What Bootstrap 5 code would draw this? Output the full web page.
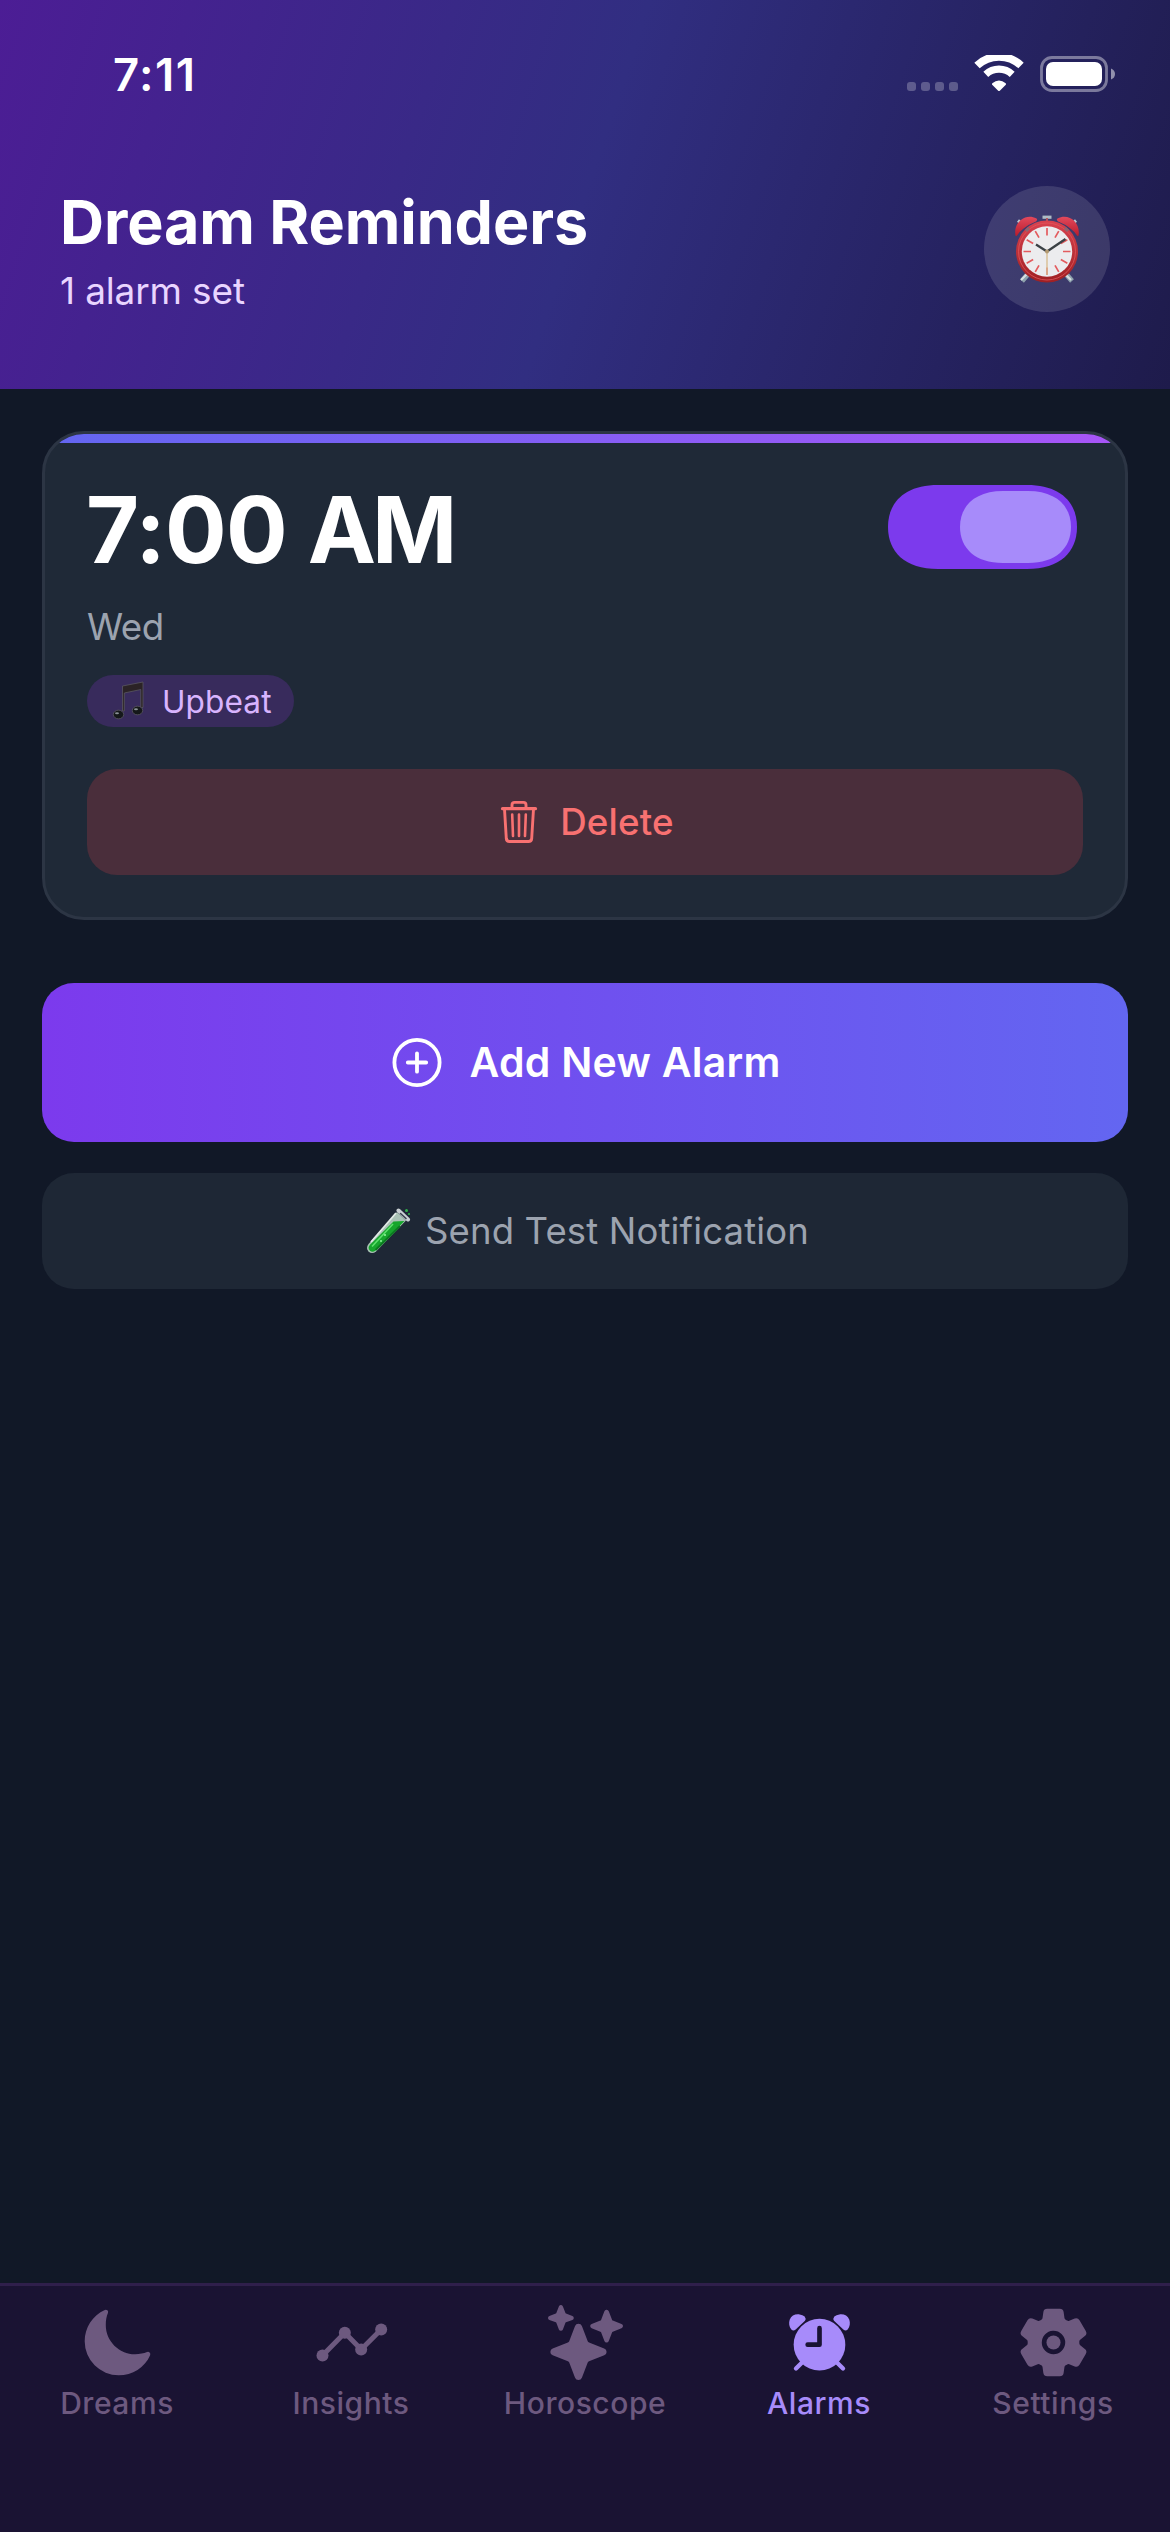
<!DOCTYPE html>
<html lang="en" data-bs-theme="dark">
<head>
<meta charset="utf-8">
<meta name="viewport" content="width=device-width, initial-scale=1">
<title>Dream Reminders</title>
<link href="https://cdn.jsdelivr.net/npm/bootstrap@5.3.0/dist/css/bootstrap.min.css" rel="stylesheet">
<style>
  body { background: #111827; font-family: Inter, "Liberation Sans", sans-serif; min-height: 2532px; }
  svg { display: block; flex: none; }
  .hero { height: 389px; background: linear-gradient(108.4deg, #4c1d95 0%, #312e81 50%, #1e1b4b 100%); }
  .status-row { height: 149px; padding: 0 54px 0 113px; }
  .status-icons { margin-bottom: 2px; }
  .clock-text { font-size: 45.5px; font-weight: 600; letter-spacing: 1.4px; line-height: 56px; }
  .title-row { padding: 35px 60px 0 60px; }
  .page-title { font-size: 61px; font-weight: 700; letter-spacing: -.1px; line-height: 76px; }
  .page-sub { font-size: 37px; letter-spacing: -.15px; line-height: 56px; margin-top: 2.5px; color: #e9d5ff; }
  .hero-icon { width: 126px; height: 126px; margin-top: 2px; background: rgba(255,255,255,.12); }
  main { padding: 42px 42px 0; }
  .alarm-card { height: 489px; border: 3px solid #2c3544; border-radius: 42px; background: #1f2937; }
  .accent-bar { height: 9px; background: linear-gradient(90deg, #6366f1, #a855f7); }
  .alarm-body { padding: 33px 42px 42px; }
  .alarm-time { font-size: 91.5px; font-weight: 700; letter-spacing: -.8px; line-height: 108px; margin-left: -1px; }
  .alarm-period { letter-spacing: -4px; }
  .switch-wrap { margin: 9px 6px 0 0; }
  .alarm-days { font-size: 36.7px; letter-spacing: -.5px; line-height: 51px; margin-top: 17px; color: #9ca3af; }
  .sound-pill { height: 52px; width: 207px; margin-top: 23px; padding-left: 25px; gap: 18px; background: #382b5c; color: #d8b4fe; font-size: 31.6px; letter-spacing: .1px; }
  .sound-pill span { padding-top: 1px; }
  .delete-btn { height: 106px; margin-top: 42px; border-radius: 30px; background: #4a2e3b; color: #f87171; font-size: 36.7px; font-weight: 500; letter-spacing: .2px; gap: 22px; border: 0; padding: 0 0 0 4px; }
  .add-btn { height: 159px; margin-top: 63px; border-radius: 32px; background: linear-gradient(90deg, #7c3aed, #6366f1); color: #fff; font-size: 41px; font-weight: 600; letter-spacing: .25px; gap: 27px; border: 0; padding: 0 0 0 3px; }
  .test-btn { height: 116px; margin-top: 31px; border-radius: 32px; background: #1e2735; color: #9ca3af; font-size: 36.5px; letter-spacing: .15px; gap: 14px; border: 0; padding: 0 0 0 5px; }
  .tabs { height: 249px; border-top: 3px solid #2f1f4b; background: #1a1333; padding-top: 18.5px; }
  .tab-link { color: #6d597f; font-size: 30px; font-weight: 500; letter-spacing: .55px; line-height: 40px; gap: 3px; padding: 0; }
  .tab-link.active { color: #a78bfa; }
</style>
<script src="https://cdn.jsdelivr.net/npm/bootstrap@5.3.0/dist/js/bootstrap.bundle.min.js"></script>
</head>
<body class="d-flex flex-column m-0">
<header class="hero text-white">
  <div class="status-row d-flex align-items-center justify-content-between">
    <span class="clock-text">7:11</span>
    <svg class="status-icons" width="209" height="38" viewBox="0 0 209 38">
      <g fill="#fff" fill-opacity=".25"><rect x="0" y="27" width="9" height="9" rx="3"/><rect x="14" y="27" width="9" height="9" rx="3"/><rect x="28" y="27" width="9" height="9" rx="3"/><rect x="42" y="27" width="9" height="9" rx="3"/></g>
      <g fill="none" stroke="#fff"><path d="M70 10.500A32 32 0 0 1 114 10.500" stroke-width="7.800"/><path d="M78.800 19.300A19.500 19.500 0 0 1 105.200 19.300" stroke-width="7.200"/></g>
      <path d="M85.300 28.200Q92 23 98.700 28.200Q99.400 29 98.800 29.700L92.800 35.700Q92 36.300 91.200 35.700L85.200 29.700Q84.600 29 85.300 28.200Z" fill="#fff"/>
      <rect x="134.500" y="2.500" width="65" height="33" rx="10.500" fill="none" stroke="#fff" stroke-opacity=".4" stroke-width="2.800"/>
      <rect x="139" y="7" width="56" height="24" rx="7" fill="#fff"/>
      <path d="M204 13.500Q208 15 208 19T204 24.500Z" fill="#fff" fill-opacity=".5"/>
    </svg>
  </div>
  <div class="title-row d-flex align-items-start justify-content-between">
    <div>
      <h1 class="page-title m-0">Dream Reminders</h1>
      <p class="page-sub mb-0">1 alarm set</p>
    </div>
    <div class="hero-icon rounded-circle d-flex align-items-center justify-content-center">
      <svg width="66" height="69" viewBox="0 0 66 69">
        <defs><linearGradient id="rim" x1="0" y1="0" x2="0" y2="1"><stop offset="0" stop-color="#d9424f"/><stop offset="1" stop-color="#9f2023"/></linearGradient>
        <linearGradient id="bell" x1="0" y1="0" x2="0" y2="1"><stop offset="0" stop-color="#e2495c"/><stop offset="1" stop-color="#b81c2c"/></linearGradient></defs>
        <path d="M14 59L8 66M52 59L58 66" stroke="#8fa3ad" stroke-width="5"/><path d="M13 59L7 65M51 59L57 65" stroke="#d8e0e4" stroke-width="2"/>
        <path d="M28.500 2.200H37.500" stroke="#aebcc5" stroke-width="3.200"/><path d="M33 3V9" stroke="#b2555f" stroke-width="2"/>
        <path d="M4 5.500L8 9M62 5.500L58 9" stroke="#b7c8d2" stroke-width="3"/>
        <circle cx="33" cy="36.500" r="31" fill="url(#rim)"/>
        <circle cx="33" cy="36.500" r="28.500" fill="none" stroke="#e0555c" stroke-width=".8"/>
        <circle cx="33" cy="36.500" r="25.200" fill="#ececee"/>
        <path d="M1.500 20.500C-1 8 11-2.500 22.500 3.500Q24 4.500 22 6.500Q15 9 9 14Q5 17 3 20.500Q2 21.500 1.500 20.500Z" fill="url(#bell)"/>
        <path d="M64.500 20.500C67 8 55-2.500 43.500 3.500Q42 4.500 44 6.500Q51 9 57 14Q61 17 63 20.500Q64 21.500 64.500 20.500Z" fill="url(#bell)"/>
        <path d="M12 16L15 13M54 16L51 13" stroke="#8b6570" stroke-width="3"/>
        <path transform="translate(0 -1)" d="M33 14V21.500M33 53.500V61M9.500 37.500H17M49 37.500H56.500M21.250 17.150L25 23.650M44.750 17.150L41 23.650M21.250 57.850L25 51.350M44.750 57.850L41 51.350M12.650 25.750L19.150 29.500M53.350 25.750L46.850 29.500M12.650 49.250L19.150 45.500M53.350 49.250L46.850 45.500" stroke="#e35b5e" stroke-width="1.700"/>
        <path d="M33 36.500V60" stroke="#d9bf93" stroke-width="1.400"/>
        <path d="M33 36.500L22 29.500M33 36.500L51.500 24" stroke="#3b4145" stroke-width="2.300"/>
        <circle cx="33" cy="36.500" r="2" fill="#b39a72"/>
      </svg>
    </div>
  </div>
</header>

<main class="flex-grow-1">
  <section class="alarm-card overflow-hidden">
    <div class="accent-bar"></div>
    <div class="alarm-body">
      <div class="d-flex justify-content-between align-items-start">
        <div class="alarm-time text-white">7:00 <span class="alarm-period">AM</span></div>
        <div class="switch-wrap" role="switch" aria-checked="true">
          <svg width="189" height="84" viewBox="0 0 189 84">
            <path d="M0 42C0 17 17 0 50 0H139C172 0 189 17 189 42S172 84 139 84H50C17 84 0 67 0 42Z" fill="#7c3aed"/>
            <path d="M72 42C72 21 87 6 115 6H140C168 6 183 21 183 42S168 78 140 78H115C87 78 72 63 72 42Z" fill="#a78bfa"/>
          </svg>
        </div>
      </div>
      <div class="alarm-days">Wed</div>
      <div class="sound-pill rounded-pill d-flex align-items-center">
        <svg width="32" height="40" viewBox="0 0 32 40" stroke="#59575f" stroke-width=".8">
          <path d="M10.500 5L31 1V26.500H28.800V8.500L12.300 12V30H10.500Z" fill="#2b2326"/>
          <ellipse cx="6.500" cy="33.500" rx="5.200" ry="4.300" fill="#15181a"/><ellipse cx="25.500" cy="29.500" rx="5.200" ry="4.300" fill="#15181a"/>
          <ellipse cx="5" cy="32.300" rx="2" ry="1" fill="#8b9296" stroke="none"/><ellipse cx="24" cy="28.300" rx="2" ry="1" fill="#8b9296" stroke="none"/>
        </svg>
        <span>Upbeat</span>
      </div>
      <button class="btn delete-btn w-100 d-flex align-items-center justify-content-center">
        <svg width="38" height="44" viewBox="0 0 38 44" fill="none" stroke="#f87171" stroke-width="2.900" stroke-linecap="round" stroke-linejoin="round">
          <path d="M4.500 9L6.300 38.500Q6.600 41.500 9.500 41.500H28.500Q31.400 41.500 31.700 38.500L33.500 9"/><path d="M2.500 8.700H35.500" stroke-width="3.200"/>
          <path d="M12 8V5Q12 2.400 14.600 2.400H23.400Q26 2.400 26 5V8"/><path d="M19 14.500V36M12.200 14.500L13 36M25.800 14.500L25 36" stroke-width="2.600"/>
        </svg>
        <span>Delete</span>
      </button>
    </div>
  </section>
  <button class="btn add-btn w-100 d-flex align-items-center justify-content-center">
    <svg width="50" height="50" viewBox="0 0 50 50" fill="none" stroke="#fff" stroke-width="3.800" stroke-linecap="round"><circle cx="25" cy="24.500" r="22.600"/><path d="M25 15.300V33.700M15.800 24.500H34.200"/></svg>
    <span>Add New Alarm</span>
  </button>
  <button class="btn test-btn w-100 d-flex align-items-center justify-content-center">
    <svg width="45" height="47" viewBox="0 0 45 47">
      <path d="M31 4L40 12.500L10 43.500Q6 46.500 2.500 43.500Q-.5 40 2.500 36Z" fill="#a9c2b5"/>
      <path d="M27.500 13.500L38.500 13L9.500 42.500Q6.500 45 3.800 42.500Q1.200 40 4 36.800Z" fill="#16a52c"/>
      <path d="M27 16L6 38.500" stroke="#5be06b" stroke-width="1.600"/><path d="M34 18L9.500 42" stroke="#0b7a20" stroke-width="2"/>
      <path d="M30 5L5 34" stroke="#e3ebe7" stroke-width="1.800"/>
      <path d="M32.500 2.500L42 11.500" stroke="#c9cfd3" stroke-width="4" stroke-linecap="round"/><path d="M34.500 5.500L40 10.500" stroke="#39434d" stroke-width="1.600" stroke-linecap="round"/>
      <g fill="#2fb14a"><circle cx="40.500" cy="2.500" r="1.500"/><circle cx="43" cy="6" r="1.100"/><circle cx="19" cy="27" r="1.100" fill="#8df29a"/><circle cx="15" cy="33" r="1" fill="#8df29a"/></g>
    </svg>
    <span>Send Test Notification</span>
  </button>
</main>

<nav class="tabs nav nav-fill flex-nowrap align-items-start">
  <a class="tab-link nav-item d-flex flex-column align-items-center text-decoration-none w-100" href="#">
    <svg width="75" height="75" viewBox="0 0 512 512" fill="currentColor"><path d="M264 480A232 232 0 0132 248c0-94 54-178.280 137.610-214.670a16 16 0 0121.060 21.060C181.070 76.430 176 104.660 176 136c0 110.280 89.720 200 200 200 31.340 0 59.570-5.070 81.610-14.670a16 16 0 0121.060 21.060C442.280 426 358 480 264 480z"/></svg>
    <span>Dreams</span>
  </a>
  <a class="tab-link nav-item d-flex flex-column align-items-center text-decoration-none w-100" href="#">
    <svg width="75" height="75" viewBox="940.5 106.5 225 225" fill="currentColor"><path d="M966 258L1033 190L1082 240L1142 180" fill="none" stroke="currentColor" stroke-width="15"/><circle cx="966" cy="258" r="18"/><circle cx="1033" cy="190" r="18"/><circle cx="1082" cy="240" r="18"/><circle cx="1142" cy="180" r="18"/></svg>
    <span>Insights</span>
  </a>
  <a class="tab-link nav-item d-flex flex-column align-items-center text-decoration-none w-100" href="#">
    <svg width="75" height="75" viewBox="0 0 512 512" fill="currentColor"><path d="M208 512a24.840 24.840 0 01-23.340-16l-39.840-103.600a16.060 16.060 0 00-9.190-9.190L32 343.340a25 25 0 010-46.680l103.600-39.840a16.060 16.060 0 009.190-9.190L184.660 144a25 25 0 0146.680 0l39.840 103.600a16.060 16.060 0 009.190 9.190l103 39.630a25.490 25.490 0 0116.630 24.100 24.820 24.820 0 01-16 22.820l-103.600 39.840a16.060 16.060 0 00-9.190 9.190L231.340 496A24.840 24.840 0 01208 512zM88 176a14.670 14.670 0 01-13.690-9.400l-16.860-43.840a7.280 7.280 0 00-4.210-4.210L9.400 101.690a14.670 14.670 0 010-27.380l43.840-16.860a7.310 7.310 0 004.210-4.210L74.160 9.790A15 15 0 0186.230.11 14.670 14.670 0 01101.690 9.400l16.860 43.840a7.310 7.310 0 004.210 4.210l43.840 16.860a14.670 14.670 0 010 27.380l-43.840 16.860a7.280 7.280 0 00-4.210 4.210l-16.860 43.840A14.670 14.670 0 0188 176zM400 256a16 16 0 01-14.930-10.260l-22.840-59.370a8 8 0 00-4.600-4.600l-59.370-22.840a16 16 0 010-29.860l59.370-22.840a8 8 0 004.600-4.600l22.670-58.950a16.450 16.450 0 0113.170-10.570 16 16 0 0116.860 10.150l22.840 59.370a8 8 0 004.600 4.600l59.370 22.840a16 16 0 010 29.860l-59.370 22.840a8 8 0 00-4.600 4.600l-22.840 59.370A16 16 0 01400 256z"/></svg>
    <span>Horoscope</span>
  </a>
  <a class="tab-link nav-item active d-flex flex-column align-items-center text-decoration-none w-100" href="#">
    <svg width="75" height="75" viewBox="126 106.5 225 225" fill="currentColor"><circle cx="238.500" cy="225.500" r="77.500"/><path d="M190 275L168 297M287 275L309 297" stroke="currentColor" stroke-width="13" stroke-linecap="round"/><path d="M195 154L167 180Q160 186 154 180C147 172 146 160 149 151C154 138 166 133 179 135Q188 136 194 141Q199 147 195 154Z"/><path d="M282 154L310 180Q317 186 323 180C330 172 331 160 328 151C323 138 311 133 298 135Q289 136 283 141Q278 147 282 154Z"/><path d="M238.500 176V225.500H203" fill="none" stroke="#1a1333" stroke-width="14" stroke-linecap="round" stroke-linejoin="round"/></svg>
    <span>Alarms</span>
  </a>
  <a class="tab-link nav-item d-flex flex-column align-items-center text-decoration-none w-100" href="#">
    <svg width="75" height="75" viewBox="0 0 512 512" fill="currentColor"><circle cx="256" cy="256" r="48"/><path d="M470.390 300l-.47-.38-31.560-24.750a16.110 16.110 0 01-6.100-13.330v-11.560a16 16 0 016.110-13.220L469.920 212l.47-.38a26.680 26.680 0 005.900-34.060l-42.710-73.900a1.590 1.590 0 01-.13-.22A26.860 26.860 0 00401 92.140l-.35.13-37.100 14.930a15.940 15.940 0 01-14.470-1.290q-4.920-3.100-10-5.860a15.940 15.940 0 01-8.190-11.820l-5.590-39.590-.12-.72A27.220 27.220 0 00298.760 26h-85.520a26.920 26.920 0 00-26.450 22.390l-.09.56-5.570 39.670a16 16 0 01-8.130 11.820 175.210 175.210 0 00-10 5.820 15.920 15.920 0 01-14.430 1.270l-37.130-15-.35-.14a26.870 26.870 0 00-32.480 11.340l-.13.22-42.770 73.950a26.710 26.710 0 005.900 34.100l.47.38 31.560 24.750a16.110 16.110 0 016.100 13.330v11.560a16 16 0 01-6.110 13.220L42.080 300l-.47.38a26.680 26.680 0 00-5.900 34.060l42.710 73.900a1.590 1.590 0 01.13.22 26.860 26.860 0 0032.450 11.300l.35-.13 37.070-14.930a15.940 15.940 0 0114.470 1.290q4.920 3.110 10 5.860a15.940 15.940 0 018.190 11.820l5.560 39.590.12.72A27.220 27.220 0 00213.240 486h85.520a26.920 26.920 0 0026.450-22.390l.09-.56 5.570-39.670a16 16 0 018.180-11.820c3.420-1.840 6.760-3.790 10-5.820a15.920 15.920 0 0114.430-1.270l37.130 14.950.35.14a26.850 26.850 0 0032.480-11.340 2.530 2.530 0 01.13-.22l42.710-73.890a26.700 26.700 0 00-5.890-34.110zm-134.480-40.240a80 80 0 11-83.660-83.670 80.210 80.210 0 0183.660 83.670z"/></svg>
    <span>Settings</span>
  </a>
</nav>
</body>
</html>
